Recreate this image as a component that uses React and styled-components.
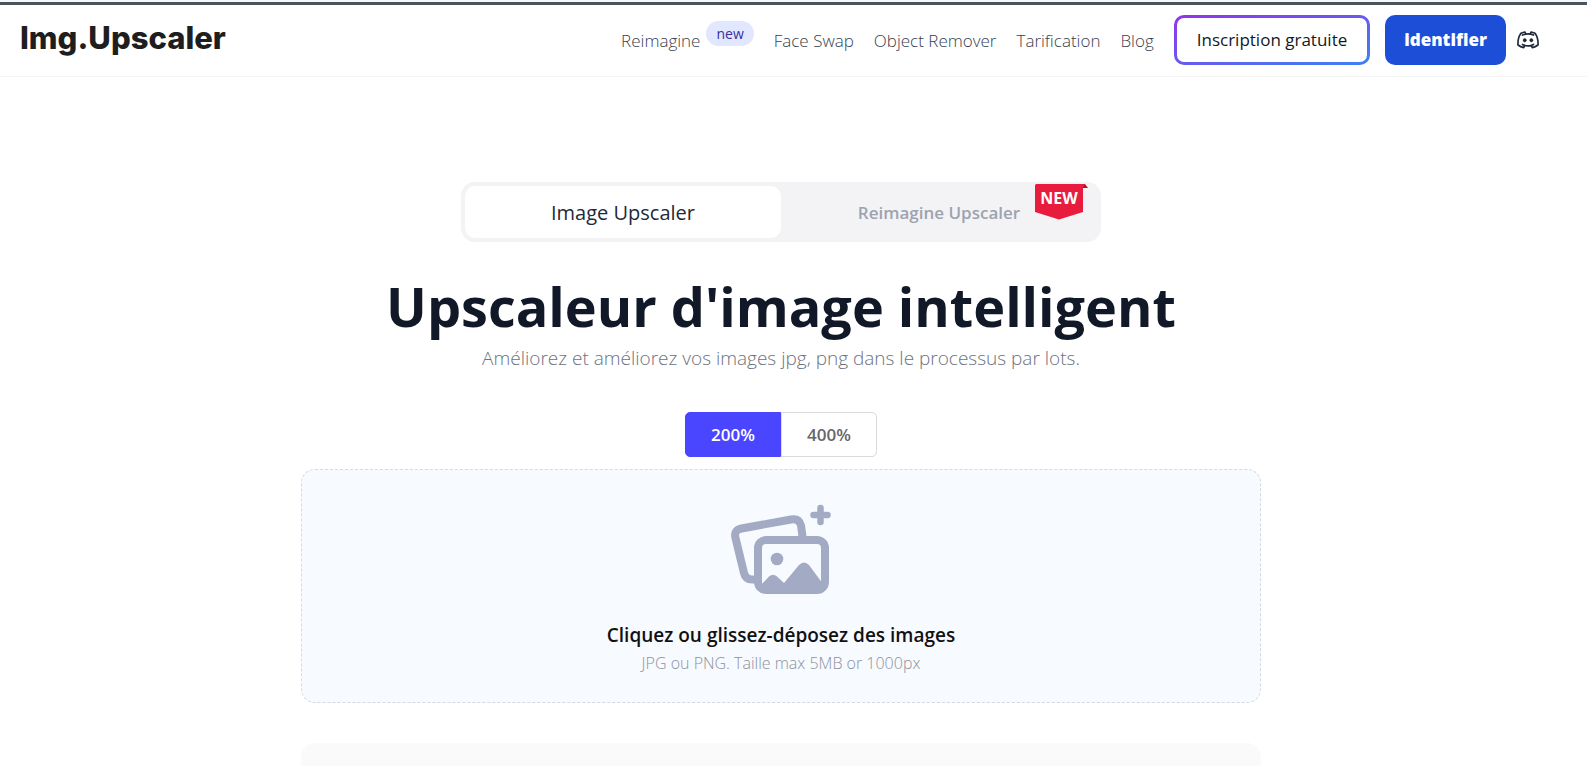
import React, { useState } from "react";
import styled, { createGlobalStyle } from "styled-components";

const GlobalStyle = createGlobalStyle`
  *, *::before, *::after { box-sizing: border-box; }
  body {
    margin: 0;
    background: #fff;
    color: #111827;
    font-family: "Open Sans", "Noto Sans", sans-serif;
  }
  button, input { font: inherit; }
`;

const Page = styled.div`
  height: 100vh;
  overflow: hidden;
`;

const TopStrip = styled.div`
  height: 5px;
  border-top: 2px solid #f3f8fb;
  background: #4b545c;
`;

const Header = styled.header`
  display: flex;
  align-items: center;
  justify-content: space-between;
  height: 72px;
  padding: 0 48px 2px 20px;
  border-bottom: 1px solid #f3f4f6;
`;

const Logo = styled.a`
  padding-bottom: 4px;
  color: #1e1e1e;
  font: 800 31px/40px Inter, sans-serif;
  text-decoration: none;
`;

const Nav = styled.nav`
  display: flex;
  align-items: center;
  gap: 20px;
`;

const NavLink = styled.a`
  display: flex;
  gap: 6px;
  padding-top: 2px;
  color: #374151;
  font-size: 17px;
  font-weight: 300;
  line-height: 24px;
  text-decoration: none;
`;

const Pill = styled.span`
  height: 25px;
  margin-top: -8px;
  padding: 0 10px;
  border-radius: 13px;
  background: #e0e7ff;
  color: #3730a3;
  font-size: 14px;
  font-weight: 500;
  line-height: 25px;
`;

const Actions = styled.div`
  display: flex;
  align-items: center;
  gap: 15px;
`;

const SignUp = styled.button`
  height: 50px;
  padding: 0 20px;
  border: 3px solid transparent;
  border-radius: 10px;
  background:
    linear-gradient(#fff, #fff) padding-box,
    linear-gradient(to bottom right, #9333ea, #3b82f6) border-box;
  color: #111827;
  font-size: 17px;
  font-weight: 500;
`;

const SignIn = styled.button`
  height: 50px;
  padding: 0 19px;
  border: 0;
  border-radius: 10px;
  background: #1d4ed8;
  color: #fff;
  font-size: 17px;
  font-weight: 800;
  font-variant-ligatures: none;
`;

const IconLink = styled.a`
  display: flex;
  margin-left: -4px;
  color: #1f2937;
`;

const Main = styled.main`
  display: flex;
  flex-direction: column;
  align-items: center;
  padding: 105px 25px 0 0;
`;

const Tabs = styled.div`
  display: grid;
  grid-template-columns: 1fr 1fr;
  width: 100%;
  max-width: 640px;
  height: 60px;
  padding: 4px;
  border-radius: 14px;
  background: #f3f3f6;
`;

const Tab = styled.button`
  position: relative;
  padding: 1px 6px 0;
  border: 0;
  border-radius: 10px;
  background: ${({ $active }) => ($active ? "#fff" : "transparent")};
  color: ${({ $active }) => ($active ? "#1f2937" : "#9ca3af")};
  font-size: ${({ $active }) => ($active ? "20px" : "17px")};
  font-weight: ${({ $active }) => ($active ? 500 : 600)};
`;

const Ribbon = styled.span`
  position: absolute;
  top: -2px;
  right: 10px;
  width: 52px;
  height: 36px;
  color: #fff;
  font-size: 16px;
  font-weight: 700;
  line-height: 29px;

  svg { position: absolute; inset: 0; }
`;

const RibbonText = styled.span`
  position: relative;
  display: block;
  width: 48px;
`;

const Title = styled.h1`
  margin: 28px 0 0;
  color: #111827;
  font-size: 54px;
  font-weight: 700;
  line-height: 72px;
`;

const Subtitle = styled.p`
  margin: 2px 0 0;
  color: #6b7280;
  font-size: 19px;
  font-weight: 300;
  line-height: 28px;
`;

const Scale = styled.div`
  display: flex;
  margin-top: 40px;
`;

const ScaleButton = styled.button`
  width: 96px;
  height: 45px;
  border: 1px solid ${({ $active }) => ($active ? "#4a45ff" : "#d9d9de")};
  background: ${({ $active }) => ($active ? "#4a45ff" : "#fff")};
  color: ${({ $active }) => ($active ? "#fff" : "#666")};
  font-size: 17px;
  font-weight: 600;

  &:first-child { border-radius: 5px 0 0 5px; }
  &:last-child { border-radius: 0 5px 5px 0; }
`;

const DropZone = styled.label`
  display: flex;
  flex-direction: column;
  align-items: center;
  width: 100%;
  max-width: 960px;
  height: 234px;
  margin-top: 12px;
  padding-top: 34px;
  border: 1px dashed #d5dae1;
  border-radius: 14px;
  background: #f7faff;
  cursor: pointer;

  input { display: none; }
`;

const DropTitle = styled.span`
  margin-top: 25px;
  color: #111;
  font-size: 19px;
  font-weight: 600;
  line-height: 28px;
`;

const DropHint = styled.span`
  color: #8b929e;
  font-size: 16px;
  font-weight: 300;
  line-height: 28px;
`;

const NextPanel = styled.section`
  width: 100%;
  max-width: 960px;
  height: 120px;
  margin-top: 40px;
  border-radius: 14px;
  background: #fafafa;
`;

const DiscordIcon = () => (
  <svg width="22" height="18" viewBox="0 0 22 18" fill="none" stroke="currentColor" strokeWidth="1.7" strokeLinecap="round" strokeLinejoin="round" aria-hidden="true">
    <path d="M5.5 13.4C8.8 15.2 13.2 15.2 16.5 13.4M5.5 4C8.8 2.7 13.2 2.7 16.5 4M14.2 14.3L15.3 16.6C17.3 16.2 19.2 15.4 21 14C21.3 9.4 20.3 5.3 18 2.3C16.8 1.7 15.5 1.2 14 1L13.3 3M7.8 14.3L6.7 16.6C4.7 16.2 2.8 15.4 1 14C0.7 9.4 1.7 5.3 4 2.3C5.2 1.7 6.5 1.2 8 1L8.7 3" />
    <ellipse cx="7.7" cy="9.2" rx="1.5" ry="1.7" fill="currentColor" strokeWidth="0.6" />
    <ellipse cx="14.3" cy="9.2" rx="1.5" ry="1.7" fill="currentColor" strokeWidth="0.6" />
  </svg>
);

const PicturesIcon = () => (
  <svg width="102" height="92" viewBox="0 0 102 92" fill="none" stroke="#a2abc3" aria-hidden="true">
    <path strokeWidth="8" d="M28 75.500H22Q15.500 75.500 14 69L5.500 34Q3.500 26 11.500 24.500L61 15.500Q69 14 71 21.500L73 36" />
    <rect x="28" y="36" width="67" height="50" rx="8" strokeWidth="8" />
    <circle cx="47" cy="55" r="6.300" fill="#a2abc3" stroke="none" />
    <path fill="#a2abc3" stroke="none" d="M30 82L39 72.500Q43 69 47 72.500L54 79L69 61Q74 56 79 61L93 80V88H30Z" />
    <path strokeWidth="6.500" strokeLinecap="round" d="M90.500 4V18M83.500 11H97.500" />
  </svg>
);

const links = [
  { label: "Reimagine", badge: "new" },
  { label: "Face Swap" },
  { label: "Object Remover" },
  { label: "Tarification" },
  { label: "Blog" },
];

export default function App() {
  const [scale, setScale] = useState("200%");
  return (
    <Page>
      <GlobalStyle />
      <TopStrip />
      <Header>
        <Logo href="#">Img.Upscaler</Logo>
        <Nav>
          {links.map(({ label, badge }) => (
            <NavLink href="#" key={label}>
              {label}
              {badge && <Pill>{badge}</Pill>}
            </NavLink>
          ))}
          <Actions>
            <SignUp type="button">Inscription gratuite</SignUp>
            <SignIn type="button">identifier</SignIn>
            <IconLink href="#" aria-label="Discord"><DiscordIcon /></IconLink>
          </Actions>
        </Nav>
      </Header>
      <Main>
        <Tabs role="tablist">
          <Tab type="button" role="tab" aria-selected="true" $active>Image Upscaler</Tab>
          <Tab type="button" role="tab" aria-selected="false">
            Reimagine Upscaler
            <Ribbon>
              <svg width="53" height="36" viewBox="0 0 53 36" aria-hidden="true">
                <path fill="#b3122a" d="M47 0H50L53 4H47Z" />
                <path fill="#e81c3c" d="M1.500 0H50L48 3V28L24 35.500L0 28V1.500Q0 0 1.500 0Z" />
              </svg>
              <RibbonText>NEW</RibbonText>
            </Ribbon>
          </Tab>
        </Tabs>
        <Title>Upscaleur d'image intelligent</Title>
        <Subtitle>Améliorez et améliorez vos images jpg, png dans le processus par lots.</Subtitle>
        <Scale>
          {["200%", "400%"].map((value) => (
            <ScaleButton type="button" key={value} $active={value === scale} aria-pressed={value === scale} onClick={() => setScale(value)}>
              {value}
            </ScaleButton>
          ))}
        </Scale>
        <DropZone>
          <input type="file" accept="image/png,image/jpeg" multiple />
          <PicturesIcon />
          <DropTitle>Cliquez ou glissez-déposez des images</DropTitle>
          <DropHint>JPG ou PNG. Taille max 5MB or 1000px</DropHint>
        </DropZone>
        <NextPanel />
      </Main>
    </Page>
  );
}
